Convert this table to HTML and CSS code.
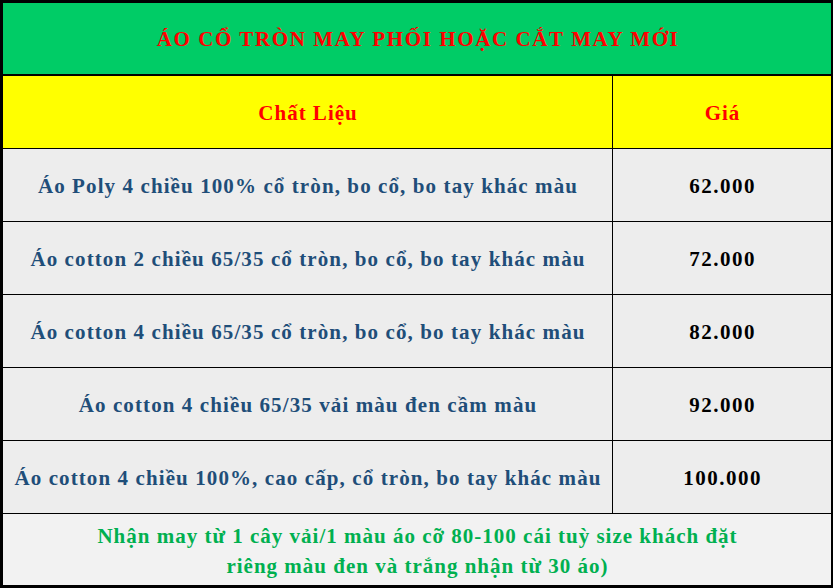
FILE: index.html
```html
<!DOCTYPE html>
<html lang="vi">
<head>
<meta charset="utf-8">
<link rel="stylesheet" href="styles.css">
</head>
<body>
<div class="table">
  <div class="title">ÁO CỔ TRÒN MAY PHỐI HOẶC CẮT MAY MỚI</div>
  <div class="row head">
    <div class="cell name">Chất Liệu</div>
    <div class="cell price">Giá</div>
  </div>
  <div class="row">
    <div class="cell name">Áo Poly 4 chiều 100% cổ tròn, bo cổ, bo tay khác màu</div>
    <div class="cell price">62.000</div>
  </div>
  <div class="row">
    <div class="cell name">Áo cotton 2 chiều 65/35 cổ tròn, bo cổ, bo tay khác màu</div>
    <div class="cell price">72.000</div>
  </div>
  <div class="row">
    <div class="cell name">Áo cotton 4 chiều 65/35 cổ tròn, bo cổ, bo tay khác màu</div>
    <div class="cell price">82.000</div>
  </div>
  <div class="row">
    <div class="cell name">Áo cotton 4 chiều 65/35 vải màu đen cầm màu</div>
    <div class="cell price">92.000</div>
  </div>
  <div class="row">
    <div class="cell name">Áo cotton 4 chiều 100%, cao cấp, cổ tròn, bo tay khác màu</div>
    <div class="cell price">100.000</div>
  </div>
  <div class="footer">Nhận may từ 1 cây vải/1 màu áo cỡ 80-100 cái tuỳ size khách đặt<br>riêng màu đen và trắng nhận từ 30 áo)</div>
</div>
</body>
</html>
```

FILE: styles.css
```css
html, body {
  margin: 0;
  padding: 0;
  background: #ffffff;
}
body {
  font-family: "Liberation Serif", "Times New Roman", serif;
  font-weight: bold;
}
.table {
  width: 833px;
  height: 588px;
  box-sizing: border-box;
  border-style: solid;
  border-color: #000;
  border-width: 3px 2px 3px 3px;
  display: flex;
  flex-direction: column;
}
.title {
  height: 73px;
  flex: none;
  border-bottom: 2px solid #000;
  background: #00cc66;
  color: #ff0000;
  font-size: 21px;
  letter-spacing: 1.6px;
  padding-left: 2px;
  padding-top: 2px;
  box-sizing: border-box;
  display: flex;
  align-items: center;
  justify-content: center;
}
.row {
  height: 72px;
  flex: none;
  border-bottom: 1px solid #000;
  display: grid;
  grid-template-columns: 610px 1fr;
  background: #ededed;
}
.cell {
  display: flex;
  align-items: center;
  justify-content: center;
  font-size: 21px;
  letter-spacing: 1.1px;
  padding: 3px 0 0 1px;
  box-sizing: border-box;
}
.name {
  border-right: 1px solid #000;
  color: #1f4e79;
}
.price {
  color: #000;
  letter-spacing: 1.5px;
}
.head {
  background: #ffff00;
}
.head .cell {
  color: #ff0000;
  letter-spacing: 1px;
}
.footer {
  height: 71px;
  flex: none;
  background: #f2f2f2;
  color: #00b050;
  font-size: 21px;
  letter-spacing: 1px;
  line-height: 30px;
  text-align: center;
  padding: 2px 0 0 1px;
  box-sizing: border-box;
  display: flex;
  align-items: center;
  justify-content: center;
}
```
